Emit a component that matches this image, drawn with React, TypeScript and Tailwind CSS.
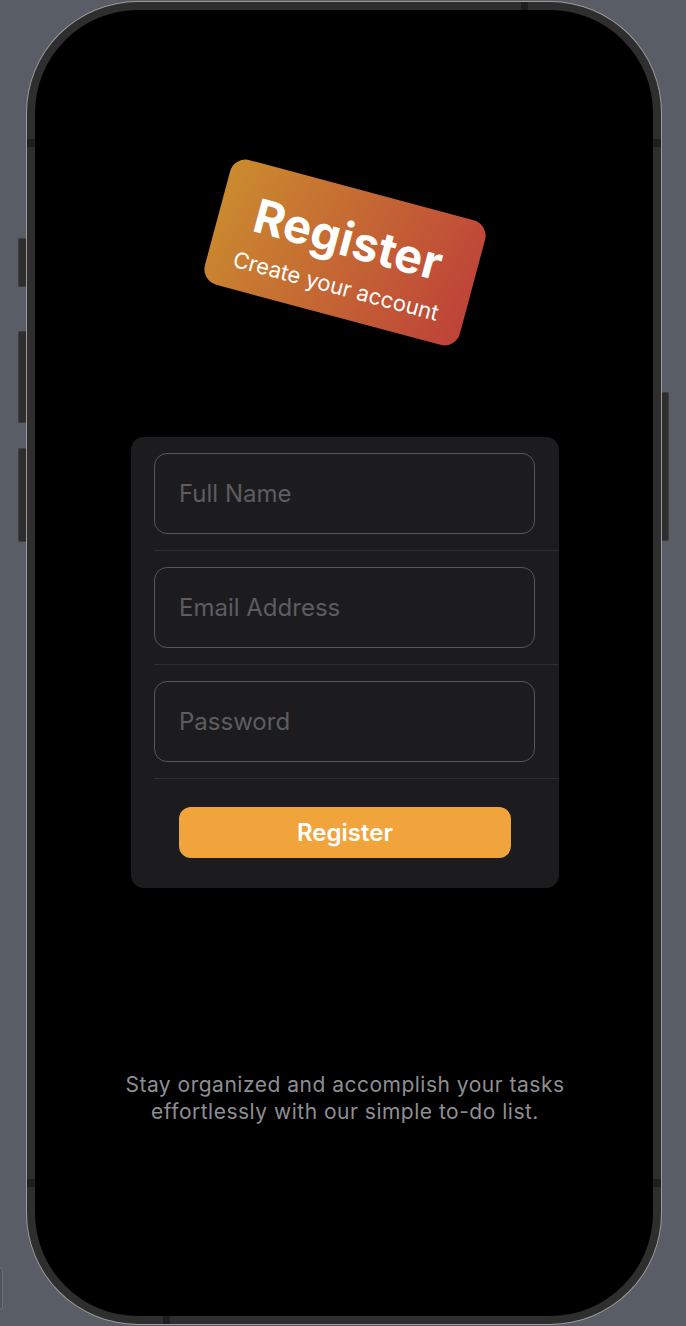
import React from "react";

const fields = ["Full Name", "Email Address", "Password"];

// Small dark marks on the phone bezel (antenna bands)
const Band = ({ className }: { className: string }) => (
  <div className={`absolute bg-[#1e1e1e] ${className}`} />
);

export default function App() {
  return (
    <div className="relative w-[686px] h-[1326px] overflow-hidden bg-[#595e66] pl-[26px] pt-px font-['Inter',sans-serif]">
      {/* simulator window edge, bottom left */}
      <div className="absolute left-[-4px] top-[1267px] h-[43px] w-[7px] rounded-[3px] border border-[#6c7078] bg-[#50545b]" />

      {/* phone body */}
      <div className="relative h-[1324px] w-[636px] rounded-[112px] bg-[#9a9a9a] p-px">
        {/* side buttons */}
        <div className="absolute left-[-8px] top-[237px] h-[49px] w-[8px] rounded-l-[2px] border border-r-0 border-[#3e3e3e] bg-[#2e2e2e]" />
        <div className="absolute left-[-8px] top-[330px] h-[92px] w-[8px] rounded-l-[2px] border border-r-0 border-[#3e3e3e] bg-[#2e2e2e]" />
        <div className="absolute left-[-8px] top-[447px] h-[94px] w-[8px] rounded-l-[2px] border border-r-0 border-[#3e3e3e] bg-[#2e2e2e]" />
        <div className="absolute right-[-7px] top-[391px] h-[149px] w-[7px] rounded-r-[2px] border border-l-0 border-[#3e3e3e] bg-[#2e2e2e]" />

        <div className="relative h-full w-full rounded-[111px] bg-[#2e2e2e] p-2">
          <Band className="left-[494px] top-0 h-[8px] w-[7px]" />
          <Band className="left-[136px] bottom-0 h-[8px] w-[7px]" />
          <Band className="left-0 top-[137px] h-[8px] w-[8px]" />
          <Band className="right-0 top-[137px] h-[8px] w-[8px]" />
          <Band className="left-0 top-[1177px] h-[8px] w-[8px]" />
          <Band className="right-0 top-[1177px] h-[8px] w-[8px]" />

          {/* screen */}
          <div className="flex h-full w-full flex-col items-center rounded-[103px] bg-black">
            {/* header card */}
            <div className="ml-[2px] mt-[178px] flex h-[129px] w-[264px] rotate-[15deg] flex-col items-center rounded-[16px] bg-linear-[105deg] from-[#cb8c2e] to-[#be4139] pt-[26px] text-white">
              <div className="text-[47px] font-bold leading-[50px] tracking-[0.3px]">Register</div>
              <div className="mt-[10px] text-[22px] leading-[26px]">Create your account</div>
            </div>

            {/* form */}
            <div className="ml-[2px] mt-[120px] w-[428px] rounded-[13px] bg-[#1c1c1e]">
              {fields.map((f) => (
                <div key={f} className="pl-[23px]">
                  <div className="py-4 pr-[24px]">
                    <input
                      type={f === "Password" ? "password" : "text"}
                      placeholder={f}
                      className="h-[81px] w-full rounded-[13px] border-[1.5px] border-[#56565a] bg-transparent px-[24px] text-[24px] text-white outline-none placeholder:text-[#5d5d61]"
                    />
                  </div>
                  <div className="h-px bg-[#2f2f32]" />
                </div>
              ))}
              <div className="px-[48px] pb-[30px] pt-[28px]">
                <button className="h-[51px] w-full rounded-[12px] bg-[#f2a43c] text-[24px] font-semibold text-white">
                  Register
                </button>
              </div>
            </div>

            {/* footer */}
            <p className="ml-[2px] mt-[183px] text-center text-[21px] leading-[27px] tracking-[0.5px] text-[#8e8e93]">
              Stay organized and accomplish your tasks
              <br />
              effortlessly with our simple to-do list.
            </p>
          </div>
        </div>
      </div>
    </div>
  );
}
